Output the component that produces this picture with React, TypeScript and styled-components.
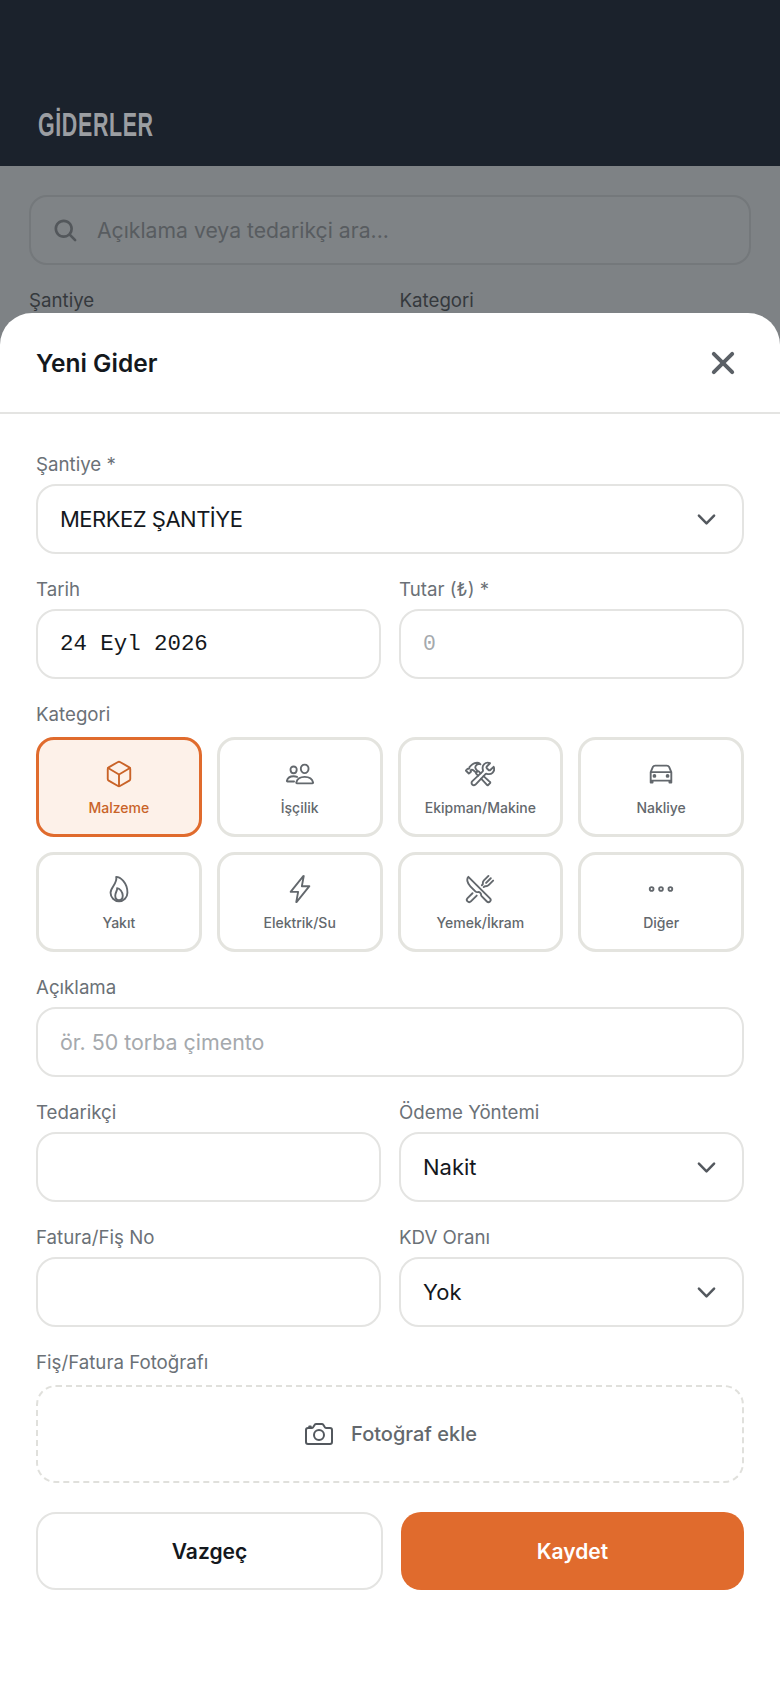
import styled, { createGlobalStyle } from "styled-components";
import {
  IoCameraOutline,
  IoCarOutline,
  IoChevronDown,
  IoClose,
  IoConstructOutline,
  IoCubeOutline,
  IoEllipsisHorizontalOutline,
  IoFlameOutline,
  IoFlashOutline,
  IoPeopleOutline,
  IoRestaurantOutline,
  IoSearch,
} from "react-icons/io5";

const categories = [
  { name: "Malzeme", icon: IoCubeOutline, active: true },
  { name: "İşçilik", icon: IoPeopleOutline },
  { name: "Ekipman/Makine", icon: IoConstructOutline },
  { name: "Nakliye", icon: IoCarOutline },
  { name: "Yakıt", icon: IoFlameOutline },
  { name: "Elektrik/Su", icon: IoFlashOutline },
  { name: "Yemek/İkram", icon: IoRestaurantOutline },
  { name: "Diğer", icon: IoEllipsisHorizontalOutline },
];

export default function App() {
  return (
    <Screen>
      <GlobalStyle />
      <PageHeader>
        <PageTitle>GİDERLER</PageTitle>
      </PageHeader>
      <PageBody>
        <SearchBox>
          <IoSearch size={27} color="#53575b" />
          <SearchText>Açıklama veya tedarikçi ara...</SearchText>
        </SearchBox>
        <FilterLabels>
          <FilterLabel>Şantiye</FilterLabel>
          <FilterLabel>Kategori</FilterLabel>
        </FilterLabels>
      </PageBody>

      <Sheet>
        <SheetHeader>
          <SheetTitle>Yeni Gider</SheetTitle>
          <IoClose size={42} color="#5b6066" />
        </SheetHeader>
        <Form>
          <Field>
            <Label>Şantiye *</Label>
            <Select $tight>
              MERKEZ ŞANTİYE
              <IoChevronDown size={27} color="#53585e" />
            </Select>
          </Field>
          <TwoColumns>
            <Field>
              <Label>Tarih</Label>
              <MonoValue>24 Eyl 2026</MonoValue>
            </Field>
            <Field>
              <Label>Tutar (₺) *</Label>
              <MonoInput placeholder="0" readOnly />
            </Field>
          </TwoColumns>
          <Field>
            <CategoryLabel>Kategori</CategoryLabel>
            <CategoryGrid>
              {categories.map((c) => (
                <CategoryCard key={c.name} $active={c.active}>
                  <c.icon size={30} />
                  <CategoryName>{c.name}</CategoryName>
                </CategoryCard>
              ))}
            </CategoryGrid>
          </Field>
          <Field>
            <Label>Açıklama</Label>
            <TextInput placeholder="ör. 50 torba çimento" readOnly />
          </Field>
          <TwoColumns>
            <Field>
              <Label>Tedarikçi</Label>
              <TextInput readOnly />
            </Field>
            <Field>
              <Label>Ödeme Yöntemi</Label>
              <Select>
                Nakit
                <IoChevronDown size={27} color="#53585e" />
              </Select>
            </Field>
          </TwoColumns>
          <TwoColumns>
            <Field>
              <Label>Fatura/Fiş No</Label>
              <TextInput readOnly />
            </Field>
            <Field>
              <Label>KDV Oranı</Label>
              <Select>
                Yok
                <IoChevronDown size={27} color="#53585e" />
              </Select>
            </Field>
          </TwoColumns>
          <Field>
            <PhotoLabel>Fiş/Fatura Fotoğrafı</PhotoLabel>
            <PhotoDrop>
              <IoCameraOutline size={32} color="#53585e" />
              Fotoğraf ekle
            </PhotoDrop>
          </Field>
          <Actions>
            <CancelButton>Vazgeç</CancelButton>
            <SaveButton>Kaydet</SaveButton>
          </Actions>
        </Form>
      </Sheet>
    </Screen>
  );
}

const GlobalStyle = createGlobalStyle`
  * {
    box-sizing: border-box;
  }
  body {
    margin: 0;
    font-family: "Inter", "Liberation Sans", sans-serif;
  }
`;

const Screen = styled.div`
  position: relative;
  width: 780px;
  height: 1688px;
  overflow: hidden;
  background: #7e8285;
`;

const PageHeader = styled.header`
  height: 166px;
  padding: 104px 38px 0;
  background: #1b222c;
`;

const PageTitle = styled.h1`
  margin: 0;
  font-family: "Liberation Sans", sans-serif;
  font-size: 34px;
  line-height: 40px;
  font-weight: 700;
  letter-spacing: 1px;
  color: #9b9ea2;
  transform: scaleX(0.63);
  transform-origin: left;
`;

const PageBody = styled.div`
  padding: 29px 29px 0;
`;

const SearchBox = styled.div`
  display: flex;
  align-items: center;
  gap: 18px;
  height: 70px;
  padding: 0 21px;
  border: 2px solid #74787b;
  border-radius: 18px;
  background: #7f8386;
`;

const SearchText = styled.span`
  font-size: 21.2px;
  color: #585c60;
`;

const FilterLabels = styled.div`
  display: grid;
  grid-template-columns: 1fr 1fr;
  gap: 19px;
  margin-top: 24px;
`;

const FilterLabel = styled.span`
  font-size: 18.7px;
  line-height: 24px;
  color: #35393d;
`;

const Sheet = styled.section`
  position: absolute;
  left: 0;
  right: 0;
  top: 313px;
  bottom: 0;
  background: #ffffff;
  border-radius: 32px 32px 0 0;
`;

const SheetHeader = styled.div`
  display: flex;
  align-items: center;
  justify-content: space-between;
  height: 101px;
  padding: 0 36px;
  border-bottom: 2px solid #e4e4e2;
`;

const SheetTitle = styled.h2`
  margin: 0;
  font-size: 24.5px;
  font-weight: 600;
  color: #14181d;
`;

const Form = styled.div`
  display: flex;
  flex-direction: column;
  gap: 24px;
  padding: 39px 36px 0;
`;

const Field = styled.div`
  display: flex;
  flex-direction: column;
  min-width: 0;
`;

const TwoColumns = styled.div`
  display: grid;
  grid-template-columns: 1fr 1fr;
  gap: 18px;
`;

const Label = styled.label`
  font-size: 18.7px;
  line-height: 24px;
  margin-bottom: 7px;
  color: #6b7177;
`;

const CategoryLabel = styled(Label)`
  margin-bottom: 10px;
`;

const PhotoLabel = styled(Label)`
  margin-bottom: 10px;
`;

const Select = styled.div<{ $tight?: boolean }>`
  display: flex;
  align-items: center;
  justify-content: space-between;
  height: 70px;
  padding: 0 22px;
  border: 2px solid #e4e4e2;
  border-radius: 20px;
  background: #ffffff;
  font-size: 22px;
  letter-spacing: ${(p) => (p.$tight ? "-0.5px" : "0")};
  color: #14181d;
`;

const MonoValue = styled(Select)`
  font-family: "Liberation Mono", monospace;
  font-size: 22.4px;
  padding-bottom: 0;
`;

const TextInput = styled.input`
  width: 100%;
  height: 70px;
  padding: 0 22px;
  border: 2px solid #e4e4e2;
  border-radius: 20px;
  outline: none;
  background: #ffffff;
  font-family: inherit;
  font-size: 21.4px;
  color: #14181d;

  &::placeholder {
    color: #a5a9ad;
    opacity: 1;
  }
`;

const MonoInput = styled(TextInput)`
  font-family: "Liberation Mono", monospace;
`;

const CategoryGrid = styled.div`
  display: grid;
  grid-template-columns: repeat(4, 1fr);
  gap: 15px;
`;

const CategoryCard = styled.div<{ $active?: boolean }>`
  display: flex;
  flex-direction: column;
  align-items: center;
  justify-content: center;
  gap: 10px;
  height: 100px;
  padding-top: 2px;
  border: 3px solid ${(p) => (p.$active ? "#e06b2d" : "#e4e4df")};
  border-radius: 18px;
  background: ${(p) => (p.$active ? "#fdf1e9" : "#ffffff")};
  color: ${(p) => (p.$active ? "#c96328" : "#63686d")};
`;

const CategoryName = styled.span`
  font-size: 14px;
  line-height: 18px;
  font-weight: 500;
`;

const PhotoDrop = styled.div`
  display: flex;
  align-items: center;
  justify-content: center;
  gap: 16px;
  height: 98px;
  border: 2px dashed #e0e0dc;
  border-radius: 20px;
  font-size: 20px;
  font-weight: 500;
  color: #63686d;
`;

const Actions = styled.div`
  display: grid;
  grid-template-columns: 347px 343px;
  justify-content: space-between;
  margin-top: 5px;
`;

const CancelButton = styled.button`
  height: 78px;
  border: 2px solid #e4e4e2;
  border-radius: 20px;
  background: #ffffff;
  font-family: inherit;
  font-size: 21px;
  font-weight: 600;
  color: #14181d;
`;

const SaveButton = styled(CancelButton)`
  border: 0;
  background: #e06b2d;
  color: #ffffff;
`;
